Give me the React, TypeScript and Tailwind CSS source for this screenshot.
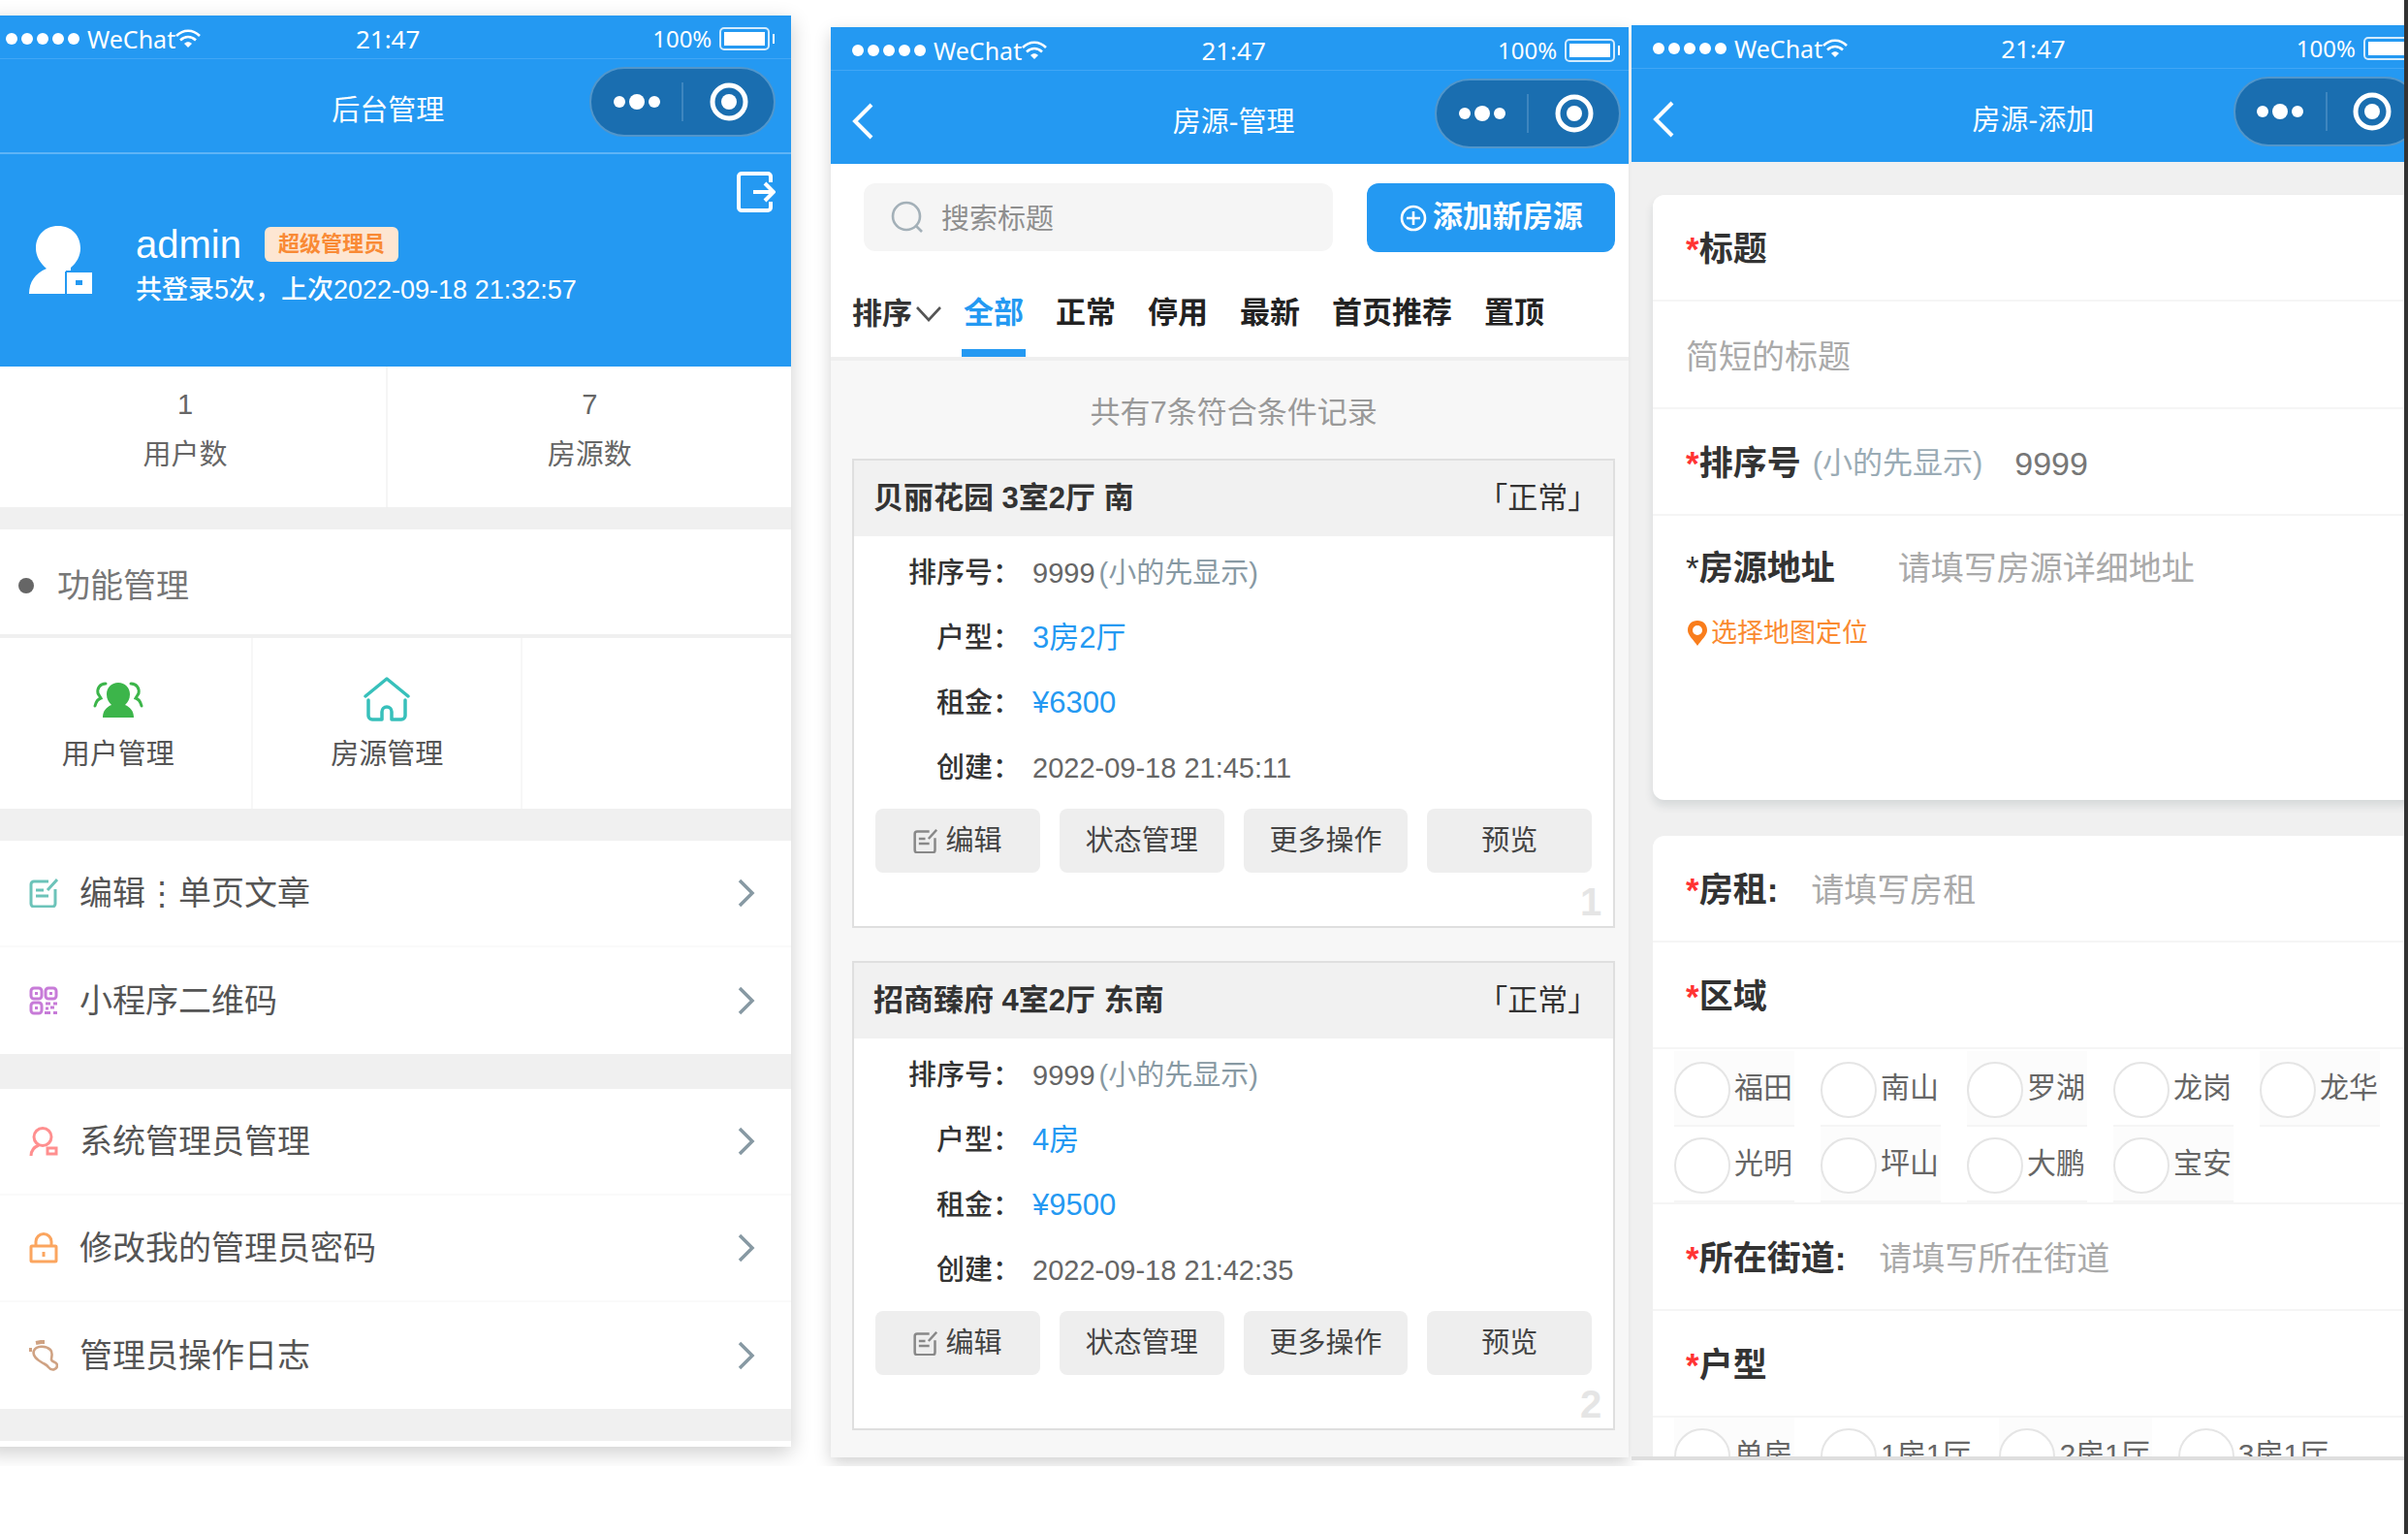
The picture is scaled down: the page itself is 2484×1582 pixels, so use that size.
import { useState } from 'react';
import type { ReactNode } from 'react';

type IconProps = { className?: string };

const EditIcon = ({ className }: IconProps) => (
  <svg viewBox="0 0 30 30" fill="none" stroke="currentColor" strokeWidth="3" className={className}>
    <path d="M20 3H5a3 3 0 0 0-3 3v20a3 3 0 0 0 3 3h19a3 3 0 0 0 3-3V11" />
    <path d="M29 1L19 12M7 12h8M7 18h13" />
  </svg>
);

const QrIcon = ({ className }: IconProps) => (
  <svg viewBox="0 0 30 30" fill="none" stroke="currentColor" strokeWidth="3" className={className}>
    <rect x="2" y="2" width="11" height="11" rx="3" />
    <rect x="17" y="2" width="11" height="11" rx="3" />
    <rect x="2" y="17" width="11" height="11" rx="3" />
    <path d="M6 7.5h3M21 7.5h3M6 22.5h3M17 18h5M25 18h4M17 23h3M22 22h4M16 27.5h6M25 27.5h4" />
  </svg>
);

const AdminIcon = ({ className }: IconProps) => (
  <svg viewBox="0 0 30 30" fill="none" stroke="currentColor" strokeWidth="3" className={className}>
    <circle cx="14" cy="10.5" r="9" />
    <path d="M2 30c0-6 3-9 8-11" />
    <rect x="19" y="22" width="9" height="6" />
  </svg>
);

const LockIcon = ({ className }: IconProps) => (
  <svg viewBox="0 0 30 32" fill="none" stroke="currentColor" strokeWidth="3" className={className}>
    <rect x="2" y="14" width="26" height="16" rx="1" />
    <path d="M7 14V9.5a8 8 0 0 1 16 0V14M15 20v5" />
  </svg>
);

const FootIcon = ({ className }: IconProps) => (
  <svg viewBox="0 0 30 32" fill="none" stroke="currentColor" strokeWidth="2.6" className={className}>
    <path d="M5 11c2-5 12-6 17-1 3 3 1 7 1 10 0 3 6 2 6 6 0 5-6 6-9 2-2-3-4-3-7-5C8 20 3 16 5 11z" />
    <path d="M0 10h3M7 3l5-1h4" strokeWidth="4" />
  </svg>
);

const UsersIcon = ({ className }: IconProps) => (
  <svg viewBox="0 0 52 38" fill="none" stroke="currentColor" strokeWidth="3" strokeLinecap="round" className={className}>
    <path d="M13 2C7 2 4 7 5 12c1 2 2 3 3 5-3 1-5 4-6 8M39 2c6 0 9 5 8 10-1 2-2 3-3 5 3 1 5 4 6 8" />
    <path
      stroke="none"
      fill="currentColor"
      d="M26 1c7 0 12 5 12 12 0 5-2 8-5 11 5 2 9 6 9 13H10c0-7 4-11 9-13-3-3-5-6-5-11C14 6 19 1 26 1z"
    />
  </svg>
);

const HouseIcon = ({ className }: IconProps) => (
  <svg viewBox="0 0 48 46" fill="none" stroke="currentColor" strokeWidth="3.5" strokeLinecap="round" strokeLinejoin="round" className={className}>
    <path d="M2 20L24 2l22 18" />
    <path d="M5 24v16a4 4 0 0 0 4 4h10V36a5 5 0 0 1 10 0v8h10a4 4 0 0 0 4-4V24" />
  </svg>
);

const ChevronRight = () => (
  <svg viewBox="0 0 18 30" fill="none" stroke="#8799a3" strokeWidth="3.5" className="w-[18px] h-[30px]">
    <path d="M2 2l13 13L2 28" />
  </svg>
);

function StatusBar() {
  return (
    <div className="grid grid-cols-3 items-center h-[45px] pt-1 px-4 border-b border-[#41a6f5] text-[26px] leading-8 font-['Noto_Sans',sans-serif]">
      <div className="flex items-center pl-1.5">
        <div className="flex gap-1 mr-2">
          {[0, 1, 2, 3, 4].map(i => (
            <span key={i} className="w-3 h-3 rounded-full bg-white" />
          ))}
        </div>
        <span className="text-[25px]">WeChat</span>
        <svg viewBox="0 0 26 20" fill="none" stroke="white" strokeWidth="2.6" className="w-[26px] h-5">
          <path d="M1 7C8 0 18 0 25 7M5 11.5c5-4.5 11-4.5 16 0" />
          <path d="M9 15c2.5-2.3 5.500-2.300 8 0l-4 4z" fill="white" stroke="none" />
        </svg>
      </div>
      <span className="text-center">21:47</span>
      <div className="flex items-center justify-end gap-2">
        <span className="text-[24px]">100%</span>
        <svg viewBox="0 0 58 24" className="w-[58px] h-6">
          <rect x="1" y="1" width="50" height="22" rx="4" fill="none" stroke="white" strokeOpacity="0.8" strokeWidth="2" />
          <rect x="5" y="5" width="42" height="14" fill="white" />
          <rect x="55" y="7" width="2" height="10" fill="white" />
        </svg>
      </div>
    </div>
  );
}

function Header({ title, back }: { title: string; back?: boolean }) {
  return (
    <header className="bg-[#2499f2] text-white">
      <StatusBar />
      <div className="grid grid-cols-[1fr_auto_1fr] items-center h-24 px-4">
        <div className="pt-2 pl-1.5">
          {back && (
            <button aria-label="返回" className="block">
              <svg viewBox="0 0 22 38" fill="none" stroke="white" strokeWidth="4" className="w-[22px] h-[38px]">
                <path d="M20 2L3 19l17 17" />
              </svg>
            </button>
          )}
        </div>
        <h1 className="pt-2.5 text-[29px] leading-10">{title}</h1>
        <div className="flex items-center justify-self-end w-48 h-[72px] mb-2 rounded-full bg-[#1a6eb0] border-2 border-[#5196cb]">
          <button aria-label="更多" className="flex flex-1 items-center justify-center gap-1">
            <span className="w-3 h-3 rounded-full bg-white" />
            <span className="w-4 h-4 rounded-full bg-white" />
            <span className="w-3 h-3 rounded-full bg-white" />
          </button>
          <span className="w-0.5 h-10 bg-[#3e86bf]" />
          <button aria-label="关闭" className="flex flex-1 items-center justify-center">
            <svg viewBox="0 0 40 40" className="w-10 h-10">
              <circle cx="20" cy="20" r="17" fill="none" stroke="white" strokeWidth="5" />
              <circle cx="20" cy="20" r="8" fill="white" />
            </svg>
          </button>
        </div>
      </div>
    </header>
  );
}

function MenuRow({ icon, label }: { icon: ReactNode; label: string }) {
  return (
    <a href="#" className="flex items-center h-[110px] pl-[46px] pr-[37px] bg-white border-b-2 border-[#fafafa] last:border-b-0">
      {icon}
      <span className="flex-1 ml-[22px] text-[34px] leading-[44px] text-[#555]">{label}</span>
      <ChevronRight />
    </a>
  );
}

function AdminHome() {
  return (
    <section className="w-[102%] -ml-4 bg-[#f0f0f0] shadow-[0_6px_20px_rgba(0,0,0,0.2)]">
      <Header title="后台管理" />
      <div className="h-[221px] pt-[18px] pl-[46px] pr-4 bg-[#2499f2] border-t-2 border-[#5fb4f6] text-white">
        <div className="flex justify-end">
          <button aria-label="退出">
            <svg viewBox="0 0 40 42" fill="none" stroke="white" strokeWidth="4" className="w-10 h-[42px]">
              <path d="M35 11V5a3 3 0 0 0-3-3H5a3 3 0 0 0-3 3v32a3 3 0 0 0 3 3h27a3 3 0 0 0 3-3v-6" />
              <path d="M17 21h20M29 12l9 9-9 9" />
            </svg>
          </button>
        </div>
        <div className="flex items-start pt-2.5">
          <svg viewBox="0 0 66 70" className="w-[66px] h-[70px] mt-1">
            <path fill="white" d="M30 0c14 0 23 10 23 23 0 8-4 15-10 20v5h22v22H0c0-12 6-21 18-26C11 38 7 31 7 23 7 10 16 0 30 0z" />
            <path d="M38 47v23M38 47h27" stroke="#2499f2" strokeWidth="2" />
            <rect x="48" y="56" width="7" height="5" fill="#2499f2" />
          </svg>
          <div className="ml-11">
            <div className="flex items-center gap-6">
              <span className="text-[40px] leading-[46px]">admin</span>
              <span className="px-[14px] rounded-md bg-[#fde6d2] text-[22px] leading-9 font-bold text-[#f98a35]">超级管理员</span>
            </div>
            <p className="mt-1 text-[27px] leading-10 font-medium">共登录5次，上次2022-09-18 21:32:57</p>
          </div>
        </div>
      </div>
      <dl className="grid grid-cols-2 bg-white text-[29px] leading-[52px] text-[#666] text-center">
        <div className="flex flex-col-reverse h-[145px] pb-7 border-r-2 border-[#f5f5f5]">
          <dt>用户数</dt>
          <dd>1</dd>
        </div>
        <div className="flex flex-col-reverse h-[145px] pb-7">
          <dt>房源数</dt>
          <dd>7</dd>
        </div>
      </dl>
      <h2 className="flex items-center h-28 mt-[23px] pt-2 pl-[35px] bg-white border-b-4 border-[#f0f0f0] text-[34px] leading-[44px] text-[#777]">
        <span className="w-4 h-4 mr-6 rounded-full bg-[#666]" />
        功能管理
      </h2>
      <nav className="grid grid-cols-3 h-[176px] bg-white text-[29px] leading-10 text-[#555]">
        <a href="#" className="flex flex-col items-center pt-[45px] border-r-2 border-[#f7f7f7]">
          <UsersIcon className="w-[52px] h-[38px] text-[#3cb54a]" />
          <span className="mt-[17px]">用户管理</span>
        </a>
        <a href="#" className="flex flex-col items-center pt-10 border-r-2 border-[#f7f7f7]">
          <HouseIcon className="w-12 h-[46px] text-[#37c0bb]" />
          <span className="mt-3.5">房源管理</span>
        </a>
      </nav>
      <nav className="mt-[33px]">
        <MenuRow icon={<EditIcon className="w-[30px] h-[30px] text-[#6cc3b9]" />} label="编辑⋮单页文章" />
        <MenuRow icon={<QrIcon className="w-[30px] h-[30px] text-[#c77bd8]" />} label="小程序二维码" />
      </nav>
      <nav className="mt-9">
        <MenuRow icon={<AdminIcon className="w-[30px] h-[30px] text-[#ff8f8f]" />} label="系统管理员管理" />
        <MenuRow icon={<LockIcon className="w-[30px] h-8 text-[#fba55f]" />} label="修改我的管理员密码" />
        <MenuRow icon={<FootIcon className="w-[30px] h-8 text-[#cfa283]" />} label="管理员操作日志" />
      </nav>
      <div className="mt-[33px] h-1.5 bg-white" />
    </section>
  );
}

type Listing = { title: string; layout: string; rent: string; created: string };

const listings: Listing[] = [
  { title: '贝丽花园 3室2厅 南', layout: '3房2厅', rent: '¥6300', created: '2022-09-18 21:45:11' },
  { title: '招商臻府 4室2厅 东南', layout: '4房', rent: '¥9500', created: '2022-09-18 21:42:35' },
];

const tabs = ['全部', '正常', '停用', '最新', '首页推荐', '置顶'];

function Field({ label, children }: { label: string; children: ReactNode }) {
  return (
    <div className="flex items-center h-[67px]">
      <dt className="w-[172px] mr-3 text-right text-[29px] font-medium text-[#333]">{label}：</dt>
      <dd className="text-[29px] text-[#666]">{children}</dd>
    </div>
  );
}

function ListingCard({ item, index }: { item: Listing; index: number }) {
  const buttonClass = 'flex items-center justify-center gap-1 h-[66px] rounded-lg bg-[#eee] text-[29px] text-[#444]';
  return (
    <article className="bg-white border-2 border-[#dfdfdf] leading-10">
      <div className="flex items-center justify-between h-[78px] pl-5 pr-4 bg-[#f1f1f1] text-[31px] text-[#333]">
        <h3 className="font-bold">{item.title}</h3>
        <span>「正常」</span>
      </div>
      <dl className="pt-1">
        <Field label="排序号">
          9999 <span className="-ml-1 text-[#8799a3]">(小的先显示)</span>
        </Field>
        <Field label="户型"><span className="text-[31px] text-[#2499f2]">{item.layout}</span></Field>
        <Field label="租金"><span className="text-[31px] text-[#2499f2]">{item.rent}</span></Field>
        <Field label="创建">{item.created}</Field>
      </dl>
      <div className="grid grid-cols-4 gap-5 mt-[9px] px-[22px]">
        <button className={buttonClass}>
          <EditIcon className="w-[25px] h-[25px] mr-1 text-[#888]" />
          编辑
        </button>
        <button className={buttonClass}>状态管理</button>
        <button className={buttonClass}>更多操作</button>
        <button className={buttonClass}>预览</button>
      </div>
      <div className="h-[55px] pt-2.5 pr-3 text-right text-[40px] font-bold text-[#e5e5e5]">{index}</div>
    </article>
  );
}

function ListingManager() {
  const [active, setActive] = useState('全部');
  return (
    <section className="w-[101%] pb-7 bg-[#f7f7f7]">
      <Header title="房源-管理" back />
      <div className="flex gap-[35px] pt-5 pl-[34px] pr-[22px] bg-white">
        <label className="flex flex-1 items-center h-[70px] pl-7 rounded-xl bg-[#f5f5f5]">
          <svg viewBox="0 0 34 34" fill="none" stroke="#a3b0b8" strokeWidth="2.6" className="w-[34px] h-[34px]">
            <circle cx="16" cy="16" r="14" />
            <path d="M26 26l6 6" />
          </svg>
          <input
            type="text"
            aria-label="搜索标题"
            placeholder="搜索标题"
            className="flex-1 min-w-0 ml-[18px] pt-1 text-[29px] leading-10 bg-transparent outline-none placeholder:text-[#8e8e8e]"
          />
        </label>
        <button className="flex items-center justify-center w-64 h-[71px] gap-1.5 rounded-xl bg-[#2499f2] text-[31px] font-bold text-white">
          <svg viewBox="0 0 28 28" fill="none" stroke="white" strokeWidth="2.6" className="w-7 h-7">
            <circle cx="14" cy="14" r="12" />
            <path d="M14 7v14M7 14h14" />
          </svg>
          添加新房源
        </button>
      </div>
      <div className="flex h-28 pl-[22px] bg-white border-b-4 border-[#efefef] text-[31px] leading-10 font-bold">
        <button className="flex items-center mr-[21px] pt-5 text-[#333]">
          排序
          <svg viewBox="0 0 26 16" fill="none" stroke="#555" strokeWidth="2.6" className="w-[26px] h-4 ml-1">
            <path d="M1 1l12 13L25 1" />
          </svg>
        </button>
        <nav className="flex gap-[29px] pt-[30px]">
          {tabs.map(tab => (
            <button
              key={tab}
              onClick={() => setActive(tab)}
              className={`px-0.5 pb-1 border-b-8 ${active === tab ? 'border-[#2499f2] text-[#2499f2]' : 'border-transparent text-[#222]'}`}
            >
              {tab}
            </button>
          ))}
        </nav>
      </div>
      <p className="pt-[34px] pb-7 text-center text-[31px] leading-[39px] text-[#999]">共有7条符合条件记录</p>
      <div className="flex flex-col gap-[34px] px-[22px]">
        {listings.map((item, i) => (
          <ListingCard key={item.title} item={item} index={i + 1} />
        ))}
      </div>
    </section>
  );
}

const inputClass = 'flex-1 min-w-0 text-[34px] leading-[44px] text-[#777] outline-none placeholder:text-[#aaa]';

function FormRow({ htmlFor, label, children }: { htmlFor?: string; label: string; children?: ReactNode }) {
  return (
    <div className="flex items-center h-[110px] pt-1 px-[34px] border-b-2 border-[#f5f5f5]">
      <label htmlFor={htmlFor} className="shrink-0 text-[35px] leading-[46px] font-bold text-[#333]">
        <span className="text-[#f33]">*</span>
        {label}
      </label>
      {children}
    </div>
  );
}

function RadioGroup({ name, options }: { name: string; options: string[] }) {
  return (
    <div className="flex flex-wrap gap-x-[27px] px-[22px]">
      {options.map(option => (
        <label key={option} className="flex items-center gap-1 h-[78px] pr-0.5 border-b-2 border-[#f5f5f5] odd:bg-[#fcfcfc] text-[30px] leading-10 text-[#666]">
          <input type="radio" name={name} className="appearance-none w-[58px] h-[58px] mt-1 rounded-full bg-white border-2 border-[#e5e5e5] checked:border-[#2499f2]" />
          {option}
        </label>
      ))}
    </div>
  );
}

function ListingForm() {
  return (
    <section className="w-[104%] bg-[#f0f0f0]">
      <Header title="房源-添加" back />
      <form className="pt-[34px] px-[22px]">
        <div className="h-[624px] bg-white rounded-xl shadow-[0_6px_10px_rgba(26,50,60,0.12)]">
          <FormRow htmlFor="title" label="标题" />
          <div className="flex items-center h-[111px] pt-1 px-[34px] border-b-2 border-[#f5f5f5]">
            <input id="title" type="text" placeholder="简短的标题" className={inputClass} />
          </div>
          <FormRow htmlFor="order" label="排序号">
            <span className="ml-3 mr-[33px] text-[31px] leading-10 text-[#9aabb5]">(小的先显示)</span>
            <input id="order" type="text" defaultValue="9999" className={inputClass} />
          </FormRow>
          <div className="flex items-center h-[108px] px-[34px]">
            <label htmlFor="address" className="shrink-0 mr-[65px] text-[35px] leading-[46px] font-bold text-[#333]">
              <span className="font-normal">*</span>房源地址
            </label>
            <input id="address" type="text" placeholder="请填写房源详细地址" className={inputClass} />
          </div>
          <button type="button" className="flex items-center gap-1 px-[36px] text-[27px] leading-[26px] text-[#fa8a30]">
            <svg viewBox="0 0 20 26" className="w-5 h-[26px]">
              <path fill="#f97d1c" fillRule="evenodd" d="M10 0c6 0 10 4 10 10 0 5-6 10-10 16C6 20 0 15 0 10 0 4 4 0 10 0zm0 5a5 5 0 1 0 0 10 5 5 0 0 0 0-10z" />
            </svg>
            选择地图定位
          </button>
        </div>
        <div className="mt-[37px] bg-white rounded-t-xl">
          <FormRow htmlFor="rent" label="房租:">
            <input id="rent" type="text" placeholder="请填写房租" className={`${inputClass} ml-[34px]`} />
          </FormRow>
          <FormRow label="区域" />
          <div className="pt-0.5 border-b-2 border-[#f5f5f5]">
            <RadioGroup name="area" options={['福田', '南山', '罗湖', '龙岗', '龙华', '光明', '坪山', '大鹏', '宝安']} />
          </div>
          <FormRow htmlFor="street" label="所在街道:">
            <input id="street" type="text" placeholder="请填写所在街道" className={`${inputClass} ml-[34px]`} />
          </FormRow>
          <FormRow label="户型" />
          <div className="h-10 overflow-hidden">
            <RadioGroup name="layout" options={['单房', '1房1厅', '2房1厅', '3房1厅']} />
          </div>
        </div>
      </form>
    </section>
  );
}

export default function App() {
  return (
    <div className="flex min-h-screen bg-white font-['Liberation_Sans','Noto_Sans_CJK_SC',sans-serif]">
      <div className="flex flex-1 items-start self-start min-w-0 pb-1.5 overflow-hidden">
        <div className="flex-[816] min-w-0 pt-4">
          <AdminHome />
        </div>
        <div className="flex-[823] min-w-0 ml-[41px] mt-7 overflow-hidden shadow-[0_6px_16px_rgba(0,0,0,0.18)]">
          <ListingManager />
        </div>
        <div className="flex-[797] min-w-0 ml-[3px] mt-[26px] overflow-hidden border-b-4 border-[#dedede]">
          <ListingForm />
        </div>
      </div>
      <div className="w-1 bg-[#333]" />
    </div>
  );
}
